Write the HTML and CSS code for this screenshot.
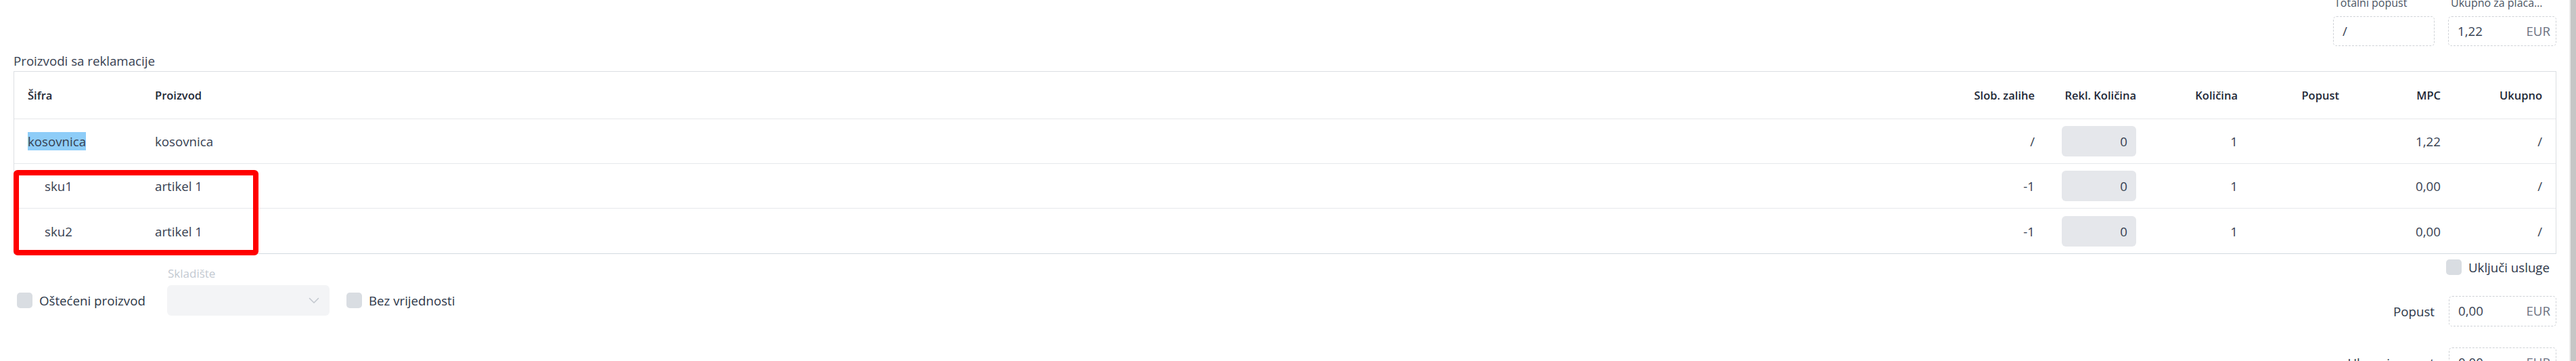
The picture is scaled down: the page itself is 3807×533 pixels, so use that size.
FILE: index.html
```html
<!DOCTYPE html>
<html lang="hr">
<head>
<meta charset="utf-8">
<title>Proizvodi sa reklamacije</title>
<link rel="stylesheet" href="styles.css">
</head>
<body>
<div class="page">
  <div class="summary-top">
    <div class="field field-narrow">
      <div class="field-label">Totalni popust</div>
      <div class="field-box"><span class="val">/</span></div>
    </div>
    <div class="field field-wide">
      <div class="field-label">Ukupno za plaćanje</div>
      <div class="field-box"><span class="val">1,22</span><span class="unit">EUR</span></div>
    </div>
  </div>

  <div class="section-title">Proizvodi sa reklamacije</div>

  <div class="table-wrap">
    <div class="table">
      <div class="row head">
        <div class="cell">Šifra</div>
        <div class="cell">Proizvod</div>
        <div class="cell num">Slob. zalihe</div>
        <div class="cell num">Rekl. Količina</div>
        <div class="cell num">Količina</div>
        <div class="cell num">Popust</div>
        <div class="cell num">MPC</div>
        <div class="cell num">Ukupno</div>
      </div>
      <div class="row">
        <div class="cell"><span class="selected">kosovnica</span></div>
        <div class="cell">kosovnica</div>
        <div class="cell num">/</div>
        <div class="cell num"><div class="qty">0</div></div>
        <div class="cell num">1</div>
        <div class="cell num"></div>
        <div class="cell num">1,22</div>
        <div class="cell num">/</div>
      </div>
      <div class="row">
        <div class="cell sub">sku1</div>
        <div class="cell">artikel 1</div>
        <div class="cell num">-1</div>
        <div class="cell num"><div class="qty">0</div></div>
        <div class="cell num">1</div>
        <div class="cell num"></div>
        <div class="cell num">0,00</div>
        <div class="cell num">/</div>
      </div>
      <div class="row last">
        <div class="cell sub">sku2</div>
        <div class="cell">artikel 1</div>
        <div class="cell num">-1</div>
        <div class="cell num"><div class="qty">0</div></div>
        <div class="cell num">1</div>
        <div class="cell num"></div>
        <div class="cell num">0,00</div>
        <div class="cell num">/</div>
      </div>
    </div>
    <div class="annotation"></div>
  </div>

  <div class="bottom">
    <div class="options">
      <div class="check-item first">
        <span class="checkbox"></span>
        <span class="check-label">Oštećeni proizvod</span>
      </div>
      <div class="select-field">
        <div class="select-label">Skladište</div>
        <div class="select">
          <svg class="chevron" width="16" height="10" viewBox="0 0 16 10"><polyline points="1.5,1.5 8,8 14.5,1.5" fill="none" stroke="#c3c8cf" stroke-width="1.6" stroke-linecap="round" stroke-linejoin="round"/></svg>
        </div>
      </div>
      <div class="check-item last-check">
        <span class="checkbox"></span>
        <span class="check-label">Bez vrijednosti</span>
      </div>
    </div>

    <div class="totals">
      <div class="services">
        <span class="checkbox"></span>
        <span class="check-label">Uključi usluge</span>
      </div>
      <div class="total-row">
        <span class="total-label">Popust</span>
        <div class="field-box tall"><span class="val">0,00</span><span class="unit">EUR</span></div>
      </div>
      <div class="total-row next">
        <span class="total-label">Ukupni popust</span>
        <div class="field-box tall"><span class="val">0,00</span><span class="unit">EUR</span></div>
      </div>
    </div>
  </div>
</div>
<div class="scrollbar"><div class="thumb"></div></div>
</body>
</html>
```

FILE: styles.css
```css
html, body {
  margin: 0;
  padding: 0;
  overflow: hidden;
  background: #ffffff;
}

body {
  font-family: "Open Sans", "Noto Sans", sans-serif;
  font-size: 18.7px;
  color: #374151;
}

.page {
  padding: 0 29px 0 20px;
}

/* top summary */
.summary-top {
  display: flex;
  justify-content: flex-end;
  gap: 20px;
  margin-top: -7px;
}

.field {
  display: flex;
  flex-direction: column;
  gap: 9px;
}

.field-narrow { width: 150px; }
.field-wide { width: 160px; }

.field-label {
  font-size: 16px;
  line-height: 22px;
  height: 22px;
  color: #4b5563;
  padding-left: 2px;
  padding-right: 18px;
  white-space: nowrap;
  overflow: hidden;
  text-overflow: ellipsis;
}

.field-wide .field-label { padding-left: 4px; }

.field-box {
  box-sizing: border-box;
  height: 44px;
  border: 1px dashed #cfd2d6;
  border-radius: 5px;
  display: flex;
  align-items: center;
  justify-content: space-between;
  padding: 0 8px 0 13px;
  line-height: 1;
}

.field-box.tall { height: 45px; width: 159px; }

.val { color: #374151; }
.unit { color: #6b7280; }

.section-title {
  margin-top: 9px;
  margin-bottom: 2px;
  line-height: 26px;
  color: #374151;
}

/* table */
.table-wrap {
  position: relative;
}

.table {
  border: 1px solid #dcdfe3;
  border-bottom-color: #d3dae1;
}

.row {
  display: grid;
  grid-template-columns: 188px 1fr repeat(6, 150px);
  align-items: center;
  box-sizing: border-box;
  height: 66px;
  border-bottom: 1px solid #e6e8eb;
}

.row.head {
  height: 70px;
  font-size: 16.5px;
  font-weight: 600;
  color: #1f2937;
}

.row.last {
  border-bottom: none;
}

.cell {
  padding: 0 20px;
  white-space: nowrap;
  overflow: hidden;
}

.cell.num {
  text-align: right;
  display: flex;
  justify-content: flex-end;
  align-items: center;
}

.cell.sub {
  padding-left: 45px;
}

.selected {
  background: #8ecdf8;
  display: inline-block;
  line-height: 27px;
}

.qty {
  box-sizing: border-box;
  width: 110px;
  height: 45px;
  background: #e5e7eb;
  border-radius: 6px;
  display: flex;
  align-items: center;
  justify-content: flex-end;
  padding-right: 13px;
  color: #374151;
}

.annotation {
  position: absolute;
  left: 0;
  top: 146px;
  width: 362px;
  height: 126px;
  box-sizing: border-box;
  border: 8px solid #ff0000;
  border-radius: 6px;
  pointer-events: none;
}

/* bottom area */
.bottom {
  display: flex;
  justify-content: space-between;
  align-items: flex-start;
}

.options {
  display: flex;
  align-items: flex-end;
  padding-top: 18px;
}

.check-item {
  display: flex;
  align-items: center;
  gap: 10px;
  height: 45px;
}

.check-item.first {
  width: 227px;
  box-sizing: border-box;
  padding-left: 5px;
}

.check-item.last-check {
  padding-left: 25px;
}

.checkbox {
  display: inline-block;
  width: 23px;
  height: 23px;
  border-radius: 5px;
  background: #d9dde2;
  flex: none;
}

.check-label {
  color: #2d3748;
  line-height: 24px;
}

.select-field {
  display: flex;
  flex-direction: column;
  gap: 6px;
}

.select-label {
  font-size: 17px;
  line-height: 22px;
  font-weight: 500;
  color: #c3c9d1;
  padding-left: 1px;
}

.select {
  box-sizing: border-box;
  width: 240px;
  height: 45px;
  background: #f3f4f6;
  border-radius: 6px;
  display: flex;
  align-items: center;
  justify-content: flex-end;
  padding-right: 15px;
}

.totals {
  display: flex;
  flex-direction: column;
  align-items: flex-end;
  padding-top: 8px;
}

.services {
  display: flex;
  align-items: center;
  gap: 10px;
  height: 23px;
  padding-right: 10px;
}

.total-row {
  display: flex;
  align-items: center;
  gap: 21px;
  margin-top: 31px;
}

.total-row.next {
  margin-top: 31px;
}

.total-label {
  color: #2d3748;
}

/* scrollbar */
.scrollbar {
  position: fixed;
  top: 0;
  right: 0;
  bottom: 0;
  width: 10px;
  background: #ececec;
  display: flex;
  justify-content: flex-end;
}

.scrollbar .thumb {
  width: 8px;
  background: #c6c6c6;
}
```
